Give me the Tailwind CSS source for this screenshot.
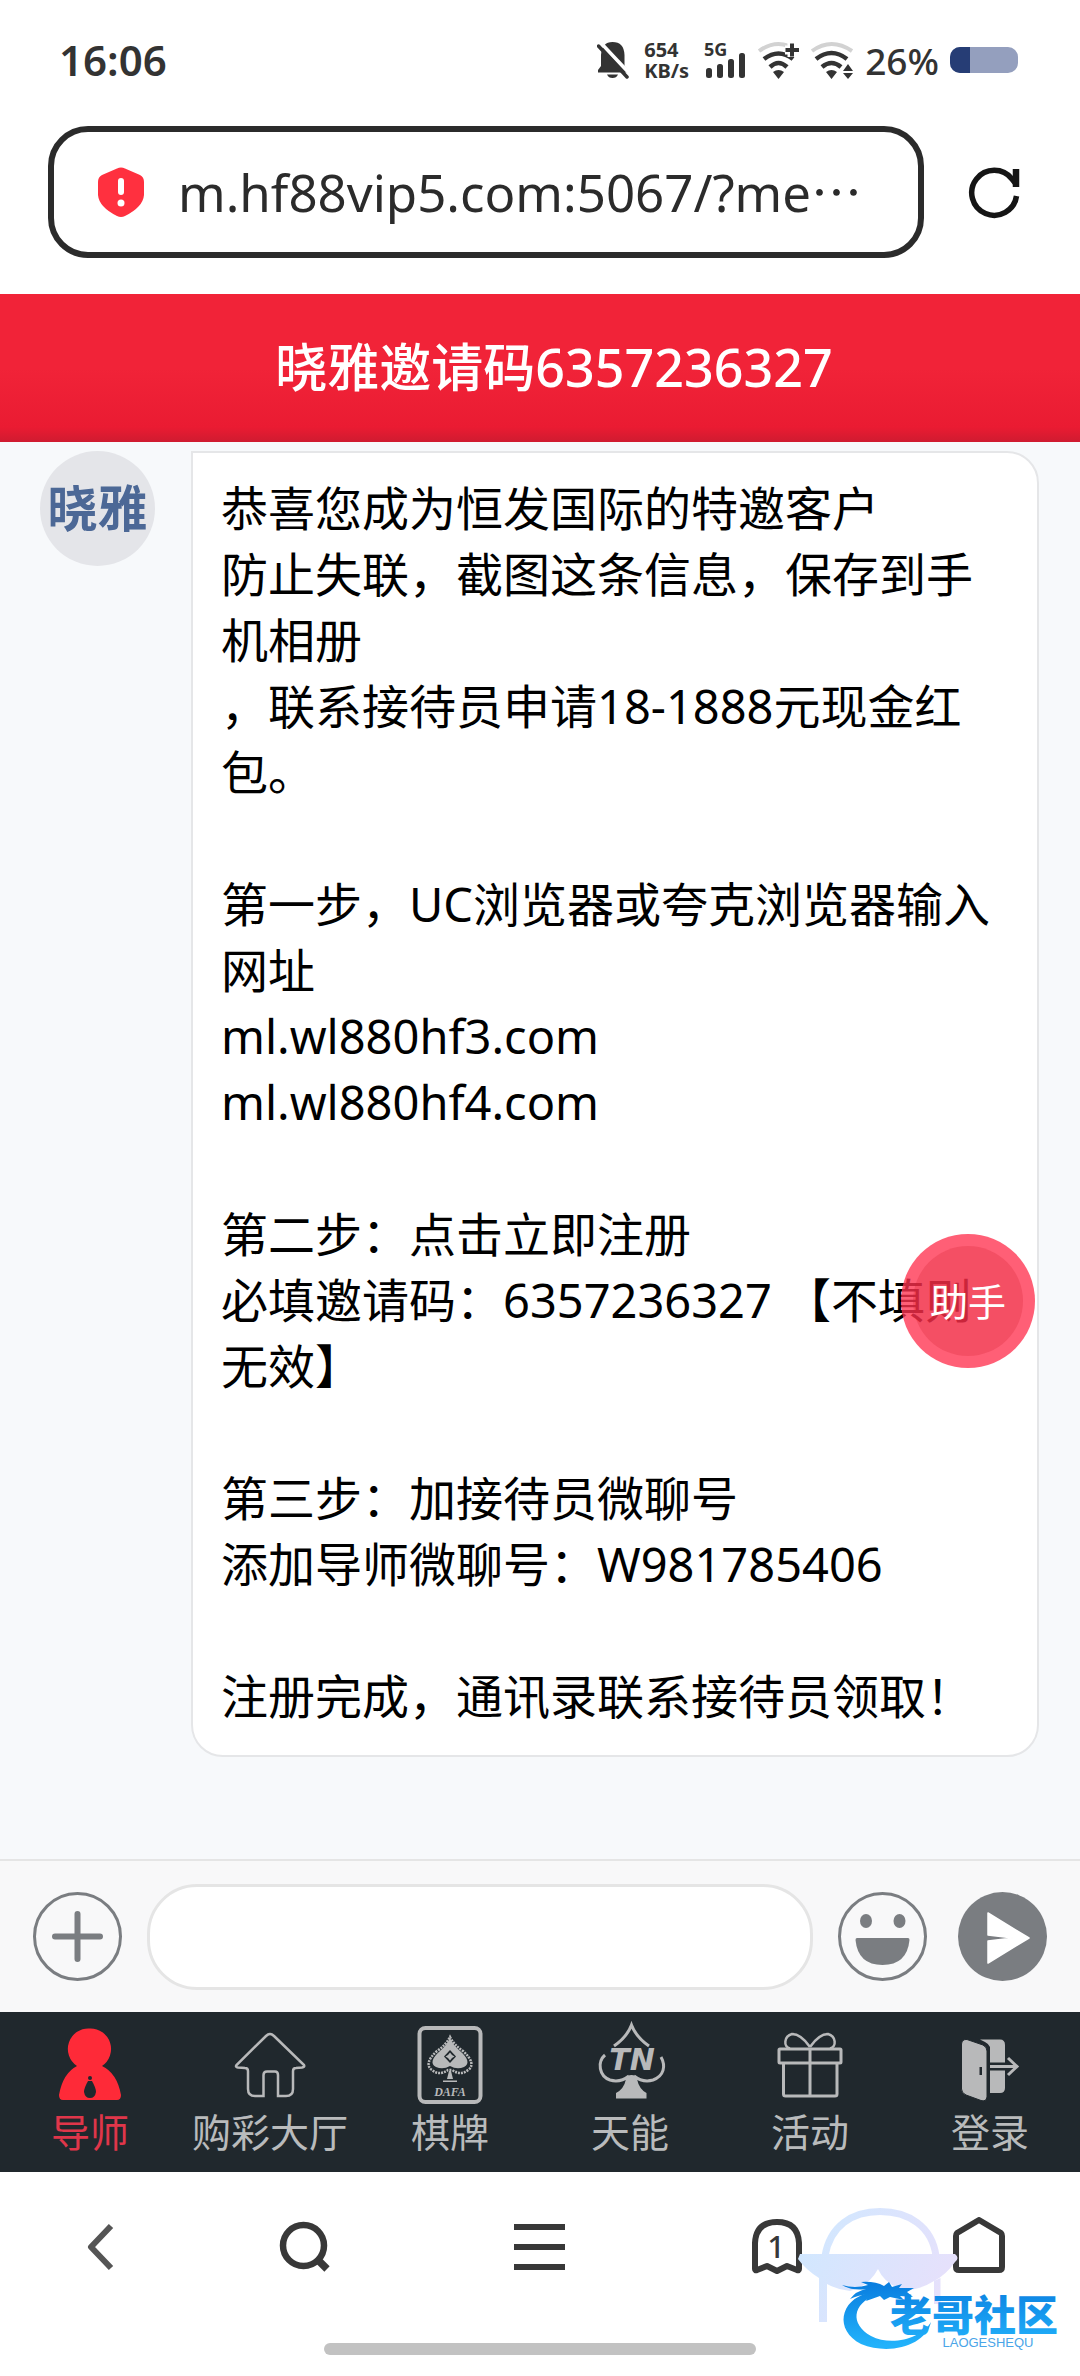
<!DOCTYPE html>
<html lang="zh-CN">
<head>
  <meta charset="UTF-8">
  <meta name="viewport" content="width=device-width, initial-scale=1.0">
  <title>晓雅邀请码6357236327</title>
  <script src="https://cdn.jsdelivr.net/npm/@tailwindcss/browser@4"></script>
</head>
<body class="relative flex min-h-screen flex-col bg-white font-['Noto_Sans','Noto_Sans_CJK_SC',sans-serif] text-[#2b2b2b]">

  <!-- Status bar -->
  <div class="flex h-[120px] items-center justify-between pr-[62px] pl-[59px] text-[#333]">
    <span class="text-[42px] leading-none font-semibold">16:06</span>
    <div class="flex items-center gap-[11px]">
      <svg class="mr-1 h-[38px] w-8" viewBox="0 0 32 38">
        <path d="M1 31.500 V29 L4 25 V14 Q5 1 15.500 1 Q27 1 27.500 14 V25 L31 29 V31.500 Z M10 33.500 H21 Q19.500 37 15.500 37 Q11.500 37 10 33.500 Z" fill="#333"/>
        <path d="M3 1 L33 33" stroke="#fff" stroke-width="3.500"/>
        <path d="M1.500 5 L30 36" stroke="#333" stroke-width="3.500" stroke-linecap="round"/>
      </svg>
      <div class="flex flex-col text-[20px] leading-[21px] font-bold">
        <span>654</span>
        <span>KB/s</span>
      </div>
      <svg class="ml-1 h-[38px] w-[42px]" viewBox="0 0 42 38" fill="#333">
        <text x="0" y="15" font-size="18" font-weight="700">5G</text>
        <rect x="2" y="27" width="6" height="10" rx="2.500"/>
        <rect x="13" y="23" width="6" height="14" rx="2.500"/>
        <rect x="24" y="18" width="6" height="19" rx="2.500"/>
        <rect x="35" y="12" width="6" height="25" rx="2.500"/>
      </svg>
      <svg class="h-[38px] w-[42px]" viewBox="0 0 42 38" fill="none">
        <path d="M2 10 Q21.500 -4 41 10" stroke="#d2d2d2" stroke-width="4"/>
        <path d="M7 18 Q21.500 7 36 18 M13 26 Q21.500 18 30 26" stroke="#333" stroke-width="4.500"/>
        <path d="M28 9 H42 M35 2 V16" stroke="#fff" stroke-width="9"/>
        <path d="M28.500 9 H42 M35 2.500 V15.500" stroke="#333" stroke-width="4"/>
        <path d="M16 31 Q21.500 27 27 31 L21.500 38 Z" fill="#333"/>
      </svg>
      <svg class="h-[38px] w-11" viewBox="0 0 44 38" fill="none">
        <path d="M2 10 Q21.500 -4 42 10" stroke="#d2d2d2" stroke-width="4"/>
        <path d="M6 18 Q21.500 6 37 18 M12 26 Q21.500 18 31 26" stroke="#333" stroke-width="4.500"/>
        <path d="M16 31 Q21.500 27 27 31 L21.500 38 Z M33 30 L38 23 L43 30 Z M33 32 H43 L38 38 Z" fill="#333"/>
      </svg>
      <span class="text-[37px] leading-none font-medium">26%</span>
      <div class="h-[26px] w-[68px] overflow-hidden rounded-[10px] bg-[#949fbe]">
        <div class="h-full bg-[#263d75]" style="width: 30%"></div>
      </div>
    </div>
  </div>

  <!-- Address bar -->
  <div class="mt-1.5 mb-9 flex items-center pr-[58px] pl-12">
    <div class="flex h-[132px] flex-1 items-center gap-[34px] rounded-[40px] border-6 border-[#2b2b2b] pr-8 pl-11">
      <svg class="h-[50px] w-[46px] shrink-0" viewBox="0 0 46 50">
        <path d="M19 1.500 Q23 -0.500 27 1.500 L42 8 Q46 10 46 15 V28 Q45 40 27 49 Q23 51 19 49 Q1 40 0 28 V15 Q0 10 4 8 Z" fill="#ff303f"/>
        <path d="M23 14 V25" stroke="#fff" stroke-width="6" stroke-linecap="round"/>
        <circle cx="23" cy="36" r="3.500" fill="#fff"/>
      </svg>
      <input type="text" aria-label="网址" value="m.hf88vip5.com:5067/?me⋯" class="w-full min-w-0 bg-transparent text-[51px] outline-none">
    </div>
    <button type="button" aria-label="刷新" class="ml-11">
      <svg class="h-[54px] w-[54px]" viewBox="968 165 54 54" fill="none" stroke="#151515" stroke-width="5.500">
        <path d="M1016.500 196 A22.500 22.500 0 1 1 1012 179 L1016 184"/>
        <path d="M1016 169 V187" stroke-width="6.500"/>
      </svg>
    </button>
  </div>

  <!-- Page title -->
  <header class="flex h-[148px] items-center justify-center bg-linear-to-b from-[#f12338] from-50% via-[#ea1b32] via-90% to-[#cf1b30] pb-0.5 pl-7">
    <h1 class="text-[52px] font-medium text-white">晓雅邀请码6357236327</h1>
  </header>

  <!-- Conversation -->
  <main class="flex flex-1 items-start gap-9 bg-[#f7f9fb] pt-[9px] pr-[41px] pl-10">
    <div class="flex h-[115px] w-[115px] shrink-0 items-center justify-center rounded-full bg-[#e4e5e9] text-[50px] font-bold whitespace-nowrap text-[#4c6896]">晓雅</div>
    <div class="relative flex-1 rounded-[32px] rounded-tl-none border-2 border-[#e5e6e8] bg-white px-7 pt-[22px] pb-[26px] text-[47px] leading-[66px] whitespace-nowrap text-black">
      <p>恭喜您成为恒发国际的特邀客户<br>防止失联，截图这条信息，保存到手<br>机相册<br>，联系接待员申请18-1888元现金红<br>包。</p>
      <br>
      <p>第一步，UC浏览器或夸克浏览器输入<br>网址<br>ml.wl880hf3.com<br>ml.wl880hf4.com</p>
      <br>
      <p>第二步：点击立即注册<br>必填邀请码：6357236327 【不填则<br>无效】</p>
      <br>
      <p>第三步：加接待员微聊号<br>添加导师微聊号：W981785406</p>
      <br>
      <p>注册完成，通讯录联系接待员领取！</p>
      <button type="button" class="absolute top-[781px] right-0.5 h-[134px] w-[134px] rounded-full bg-[#ff324f]/78 p-3 text-[38px] text-white">
        <span class="flex h-full w-full items-center justify-center rounded-full bg-[#d5202f]/25">助手</span>
      </button>
    </div>
  </main>

  <!-- Message box -->
  <form class="flex h-[153px] items-center gap-[25px] border-t-2 border-[#e5e5e5] bg-[#f8f8f9] px-[33px]">
    <button type="button" aria-label="更多">
      <svg class="h-[89px] w-[89px]" viewBox="0 0 89 89" fill="none" stroke="#7a7d81">
        <circle cx="44.500" cy="44.500" r="43" stroke-width="3"/>
        <path d="M44.500 22 V67 M22 44.500 H67" stroke-width="6" stroke-linecap="round"/>
      </svg>
    </button>
    <input type="text" aria-label="消息" class="h-[106px] min-w-0 flex-1 rounded-[50px] border-3 border-[#e5e5e5] bg-white px-10 text-[42px] outline-none">
    <button type="button" aria-label="表情">
      <svg class="h-[89px] w-[89px]" viewBox="0 0 89 89" fill="#7a7d81">
        <circle cx="44.500" cy="44.500" r="43" fill="none" stroke="#7a7d81" stroke-width="3"/>
        <ellipse cx="28" cy="29" rx="6" ry="7"/>
        <ellipse cx="61.500" cy="29" rx="6" ry="7"/>
        <path d="M19 46 H70 Q71.500 46 71.500 48 Q69 73 44.500 73 Q20 73 17.500 48 Q17.500 46 19 46 Z"/>
      </svg>
    </button>
    <button type="submit" aria-label="发送" class="ml-1.5">
      <svg class="h-[89px] w-[89px]" viewBox="0 0 89 89">
        <circle cx="44.500" cy="44.500" r="44.500" fill="#7a7d81"/>
        <path d="M30 21 L71 46 L30 71 V49 L55 46 L30 43 Z" fill="#fff" stroke="#fff" stroke-width="1.500" stroke-linejoin="round"/>
      </svg>
    </button>
  </form>

  <!-- Site tabs -->
  <nav class="grid h-40 grid-cols-6 bg-[#20282d] text-[39px] leading-[48px] whitespace-nowrap text-[#b9bbbc]">
    <a href="#" class="flex flex-col items-center pt-2 text-[#e0364a]">
      <svg class="h-[88px] w-[90px]" viewBox="45 2020 90 88">
        <path d="M90 2028.500 A20.500 20.500 0 0 1 102 2066 Q117 2073 121 2095 Q121 2100 117 2100 H63 Q59 2100 59 2095 Q63 2073 77 2066 A20.500 20.500 0 0 1 90 2028.500 Z" fill="#fe2a38"/>
        <circle cx="90" cy="2078" r="2" fill="#20282d"/>
        <path d="M88 2081 H92 Q96 2088 96 2092 Q95 2098 90 2098 Q85 2098 84 2092 Q84 2088 88 2081 Z" fill="#20282d"/>
      </svg>
      导师
    </a>
    <a href="#" class="flex flex-col items-center pt-2">
      <svg class="h-[88px] w-[90px]" viewBox="225 2020 90 88" fill="none" stroke="#b8b9ba" stroke-width="2.500">
        <path d="M266 2036 Q270 2032 274 2036 L304 2065 Q305 2067 302 2067.500 L296 2068 Q293 2068 293 2071 V2089 Q293 2096 286 2096 H278 V2075 Q278 2071.500 275 2071.500 H267 Q263.500 2071.500 263.500 2075 V2096 H255 Q248 2096 248 2089 V2071 Q248 2068 245 2068 L238 2067.500 Q235 2067 236.500 2065 Z"/>
      </svg>
      购彩大厅
    </a>
    <a href="#" class="flex flex-col items-center pt-2">
      <svg class="h-[88px] w-[90px]" viewBox="405 2020 90 88" fill="#b8b9ba">
        <rect x="419.500" y="2028" width="61" height="74" rx="6" fill="none" stroke="#b8b9ba" stroke-width="4"/>
        <path d="M450 2037 Q454 2045 463 2051 C472 2059 474 2066 468 2070 Q461 2076 452 2070 Q448 2070 448 2070 Q439 2076 432 2070 C426 2066 428 2059 437 2051 Q446 2045 450 2037 Z" fill="none" stroke="#b8b9ba" stroke-width="2.500" stroke-dasharray="2 1"/>
        <path d="M450 2038 Q453 2045 460 2051 C468 2058 470 2064 464 2067 Q457 2070 450 2066 Q443 2070 436 2067 C430 2064 432 2058 440 2051 Q447 2045 450 2038 Z"/>
        <path d="M450 2050 L456 2056.500 L450 2063 L444 2056.500 Z" fill="#20282d"/>
        <path d="M450 2052.500 L452 2055 L454.500 2056.500 L452 2058 L450 2060.500 L448 2058 L445.500 2056.500 L448 2055 Z"/>
        <path d="M449 2071 H451 L453 2079 H447 Z M443 2080.500 H457 V2082 H443 Z"/>
        <text x="450" y="2096" font-family="Liberation Serif" font-size="12" font-style="italic" font-weight="700" text-anchor="middle">DAFA</text>
      </svg>
      棋牌
    </a>
    <a href="#" class="flex flex-col items-center pt-2">
      <svg class="h-[88px] w-[90px]" viewBox="585 2020 90 88" fill="none" stroke="#b8b9ba" stroke-width="3">
        <path d="M614 2046 Q627 2037 631.500 2025 Q636 2037 649 2046"/>
        <path d="M605 2055 C597 2062 599 2076 610 2080 Q620 2083 629 2076 M634 2076 Q643 2083 653 2080 C664 2076 666 2066 661 2057"/>
        <path d="M631.500 2075 Q636 2075 637 2079 Q639 2089 646.500 2093 V2098.500 H616 V2093 Q624 2089 626 2079 Q627 2075 631.500 2075 Z" fill="#b8b9ba" stroke="none"/>
        <text x="632" y="2070" fill="#b8b9ba" stroke="none" font-family="DejaVu Sans" font-size="30" font-style="italic" font-weight="700" text-anchor="middle">TN</text>
      </svg>
      天能
    </a>
    <a href="#" class="flex flex-col items-center pt-2">
      <svg class="h-[88px] w-[90px]" viewBox="765 2020 90 88" fill="none" stroke="#b8b9ba" stroke-width="3">
        <rect x="779" y="2049" width="62" height="14" rx="1"/>
        <path d="M783.500 2063 V2094 Q783.500 2096 785.500 2096 H835 Q837 2096 837 2094 V2063 M810 2049 V2096"/>
        <path d="M810 2047 Q801 2034 792 2034 C784 2036 783 2047 790 2048.500 M810 2047 Q819 2034 828 2034 C836 2036 837 2047 830 2048.500" stroke-width="2.500"/>
      </svg>
      活动
    </a>
    <a href="#" class="flex flex-col items-center pt-2">
      <svg class="h-[88px] w-[90px]" viewBox="945 2020 90 88" fill="#b8b9ba">
        <path d="M980 2039.500 H1000 Q1005 2039.500 1005 2045 V2088 Q1005 2093 1000 2093 H990 V2047 Q989 2044 985 2042 Z"/>
        <path d="M989 2066.500 H1018" stroke="#20282d" stroke-width="8"/>
        <path d="M967 2039.500 L983 2045 Q987 2047 987 2051 V2097 Q986 2102 981 2100.500 L966 2095 Q961.500 2093 961.500 2089 V2044 Q962 2039 967 2039.500 Z" stroke="#20282d" stroke-width="1"/>
        <path d="M990 2066.500 H1017 M1008 2058 L1017 2066.500 L1008 2075" fill="none" stroke="#b8b9ba" stroke-width="3"/>
        <rect x="979.500" y="2067" width="2.500" height="8" fill="#20282d"/>
      </svg>
      登录
    </a>
  </nav>

  <!-- Browser toolbar -->
  <footer class="h-[204px]">
    <div class="grid h-[150px] grid-cols-[201fr_206fr_266fr_207fr_200fr] items-center justify-items-center">
      <button type="button" aria-label="后退">
        <svg class="h-[60px] w-[60px]" viewBox="70 2217 60 60" fill="none" stroke="#555" stroke-width="6">
          <path d="M110 2226 L90 2247 L110 2268" stroke-linejoin="round"/>
        </svg>
      </button>
      <button type="button" aria-label="搜索">
        <svg class="h-[60px] w-[60px]" viewBox="272 2217 60 60" fill="none" stroke="#383838">
          <circle cx="301.500" cy="2245.500" r="20.500" stroke-width="6.500"/>
          <path d="M317 2261 L325 2269" stroke-width="7.500"/>
        </svg>
      </button>
      <button type="button" aria-label="菜单">
        <svg class="h-[60px] w-[60px]" viewBox="510 2217 60 60" stroke="#383838" stroke-width="6">
          <path d="M514 2227 H565 M514 2247 H565 M514 2267 H565"/>
        </svg>
      </button>
      <button type="button" aria-label="标签页">
        <svg class="h-[60px] w-[60px]" viewBox="746 2217 60 60">
          <path d="M754 2269 V2243 Q755 2222 776 2222 Q797 2222 798 2243 V2269 Q798 2271 796 2270 L786 2266 L776 2271 L766 2266 L756 2270 Q754 2271 754 2269 Z" fill="none" stroke="#383838" stroke-width="6" stroke-linejoin="round"/>
          <text x="775" y="2258" fill="#383838" font-size="31" font-weight="500" text-anchor="middle">1</text>
        </svg>
      </button>
      <button type="button" aria-label="主页">
        <svg class="h-[60px] w-[60px]" viewBox="950 2217 60 60" fill="none" stroke="#383838" stroke-width="6" stroke-linejoin="round">
          <path d="M979 2220 L1001 2233 Q1002 2234 1002 2236 V2267 Q1002 2270 999 2270 H959 Q956 2270 956 2267 V2236 Q956 2234 957 2233 Z"/>
        </svg>
      </button>
    </div>
    <div class="mx-auto mt-[21px] h-3 w-2/5 rounded-full bg-[#c2c2c2]"></div>
  </footer>

  <!-- Community watermark -->
  <svg class="pointer-events-none absolute right-2 bottom-5 h-[156px] w-[280px]" viewBox="792 2200 280 156" role="img" aria-label="老哥社区">
    <defs>
      <linearGradient id="pale" gradientUnits="userSpaceOnUse" x1="800" y1="2220" x2="950" y2="2300">
        <stop offset="0" stop-color="#cfe8ff"/>
        <stop offset="1" stop-color="#e8e0fb"/>
      </linearGradient>
      <linearGradient id="blue" gradientUnits="userSpaceOnUse" x1="0" y1="2285" x2="0" y2="2345">
        <stop offset="0" stop-color="#0a7fe0"/>
        <stop offset="1" stop-color="#22b2fb"/>
      </linearGradient>
    </defs>
    <path d="M825 2256 C830 2226 852 2211.500 880 2211.500 C908 2211.500 932 2226 936 2256" fill="none" stroke="url(#pale)" stroke-width="7"/>
    <path d="M800 2254 H955 Q960 2258 955 2262 Q946 2275 934 2281 L940.500 2278 V2304 H934 V2281 Q920 2290 905 2290 Q885 2285 878 2269 Q869 2286 850 2291 Q838 2290 827 2284 V2322 H819 V2278 Q806 2270 798 2259 Z" fill="url(#pale)"/>
    <path d="M868 2293 C840 2300 834 2330 861 2344 C890 2356 926 2345 931 2322 C922 2338 892 2347 871 2336 C850 2324 852 2304 876 2295 Z" fill="url(#blue)"/>
    <path d="M842 2285 Q855 2289 868 2285 L861 2282 Q875 2281 884 2286 L889 2282 L892 2287 L902 2284 L899 2288 L914 2288 L907 2292 L913 2297 L900 2296 L904 2300 L890 2297 L884 2300 L880 2296 L866 2301 L870 2294 Q858 2295 850 2299 Q856 2291 866 2289 Q852 2291 842 2285 Z" fill="url(#blue)"/>
    <text x="974" y="2331" fill="url(#blue)" font-family="Noto Sans CJK SC" font-size="42" font-weight="900" text-anchor="middle">老哥社区</text>
    <text x="988" y="2347" fill="#4aa5e8" font-family="Liberation Sans" font-size="13" text-anchor="middle">LAOGESHEQU</text>
  </svg>
</body>
</html>
